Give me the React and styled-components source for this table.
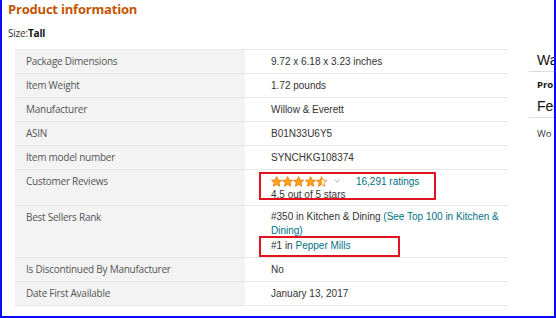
import React from "react";
import styled, { createGlobalStyle } from "styled-components";

const Global = createGlobalStyle`
  html, body { margin: 0; padding: 0; background: #fff; }
  body { font-family: "Liberation Sans", Arial, sans-serif; }
`;

const Page = styled.div`
  position: relative;
  width: 556px;
  height: 318px;
  box-sizing: border-box;
  border: 2px solid #0a0aff;
  border-top: none;
  overflow: hidden;
  display: flex;
  background: #fff;
`;

const Main = styled.div`
  flex: 0 0 auto;
  box-sizing: border-box;
  width: 506px;
  padding-left: 6px;
`;

const Title = styled.h2`
  margin: 0;
  padding-top: 1px;
  font-family: "Open Sans", sans-serif;
  font-weight: 700;
  font-size: 13px;
  line-height: 17px;
  color: #c45500;
  letter-spacing: -0.2px;
`;

const SizeLine = styled.div`
  margin-top: 8px;
  font-family: "Open Sans", sans-serif;
  font-size: 10px;
  line-height: 15px;
  color: #333;
  letter-spacing: -0.2px;

  b { font-weight: 700; color: #111; }
`;

const Table = styled.table`
  margin-top: 8px;
  margin-left: 7px;
  width: 493px;
  border-collapse: collapse;
  border-top: 1px solid #e7e7e7;
`;

const Row = styled.tr`
  border-bottom: 1px solid #e7e7e7;
`;

const Label = styled.th`
  width: 230px;
  box-sizing: border-box;
  background: #f3f3f3;
  padding: 4px 8px 4px 11px;
  text-align: left;
  vertical-align: top;
  font-family: "Open Sans", sans-serif;
  font-weight: 400;
  font-size: 10px;
  letter-spacing: -0.25px;
  line-height: 15px;
  height: ${(p) => p.$h || 23}px;
  color: #555;
`;

const Value = styled.td`
  box-sizing: border-box;
  padding: 4px 5px 4px 26px;
  vertical-align: top;
  font-size: 10px;
  line-height: ${(p) => p.$lh || 15}px;
  color: #333;
`;

const Link = styled.span`
  color: #007185;
`;

const RatingLine = styled.div`
  display: flex;
  align-items: center;
  height: 14px;
`;

const Stars = styled.div`
  display: flex;
`;

const Caret = styled.svg`
  margin-left: 7px;
  margin-right: 16px;
`;

const Sidebar = styled.div`
  flex: 0 0 200px;
  margin-left: 21px;
  padding-top: 49px;
`;

const SideHeading = styled.div`
  padding-left: 8px;
  margin-top: ${(p) => p.$gap || 0}px;
  font-family: "Liberation Sans", Arial, sans-serif;
  font-size: 14px;
  line-height: 22px;
  color: #111;
  border-bottom: 1px solid #ddd;
`;

const SideSmall = styled.div`
  padding-left: 8px;
  font-family: "Open Sans", sans-serif;
  font-size: 9.5px;
  font-weight: ${(p) => (p.$bold ? 700 : 400)};
  line-height: 14px;
  margin: ${(p) => (p.$bold ? "6px 0 3px" : "9px 0 3px")};
  color: ${(p) => (p.$bold ? "#111" : "#333")};
`;

const Mark = styled.div`
  position: absolute;
  border: 2px solid #e3121f;
  box-sizing: border-box;
`;

function Star({ fill }) {
  const id = `half-${fill}`;
  const pts = "5.5,0.6 7,4 10.6,4.3 7.9,6.7 8.7,10.3 5.5,8.4 2.3,10.3 3.1,6.7 0.4,4.3 4,4";
  return (
    <svg width="11.2" height="11" viewBox="0 0 11 11">
      <defs>
        <linearGradient id={id}>
          <stop offset={fill} stopColor="#ffa41c" />
          <stop offset={fill} stopColor="#fff" />
        </linearGradient>
      </defs>
      <polygon points={pts} fill={`url(#${id})`} stroke="#e47911" strokeWidth="0.8" strokeLinejoin="round" />
    </svg>
  );
}

const rows = [
  ["Package Dimensions", "9.72 x 6.18 x 3.23 inches"],
  ["Item Weight", "1.72 pounds"],
  ["Manufacturer", "Willow & Everett"],
  ["ASIN", "B01N33U6Y5"],
  ["Item model number", "SYNCHKG108374"],
];

export default function App() {
  return (
    <Page>
      <Global />
      <Main>
        <Title>Product information</Title>
        <SizeLine>
          Size:<b>Tall</b>
        </SizeLine>
        <Table>
          <tbody>
            {rows.map(([k, v]) => (
              <Row key={k}>
                <Label>{k}</Label>
                <Value>{v}</Value>
              </Row>
            ))}
            <Row>
              <Label $h={36}>Customer Reviews</Label>
              <Value $lh={13}>
                <RatingLine>
                  <Stars>
                    <Star fill="1" />
                    <Star fill="1" />
                    <Star fill="1" />
                    <Star fill="1" />
                    <Star fill="0.5" />
                  </Stars>
                  <Caret width="6" height="4" viewBox="0 0 6 4">
                    <path d="M0.5 0.5 L3 3 L5.5 0.5" fill="none" stroke="#aaa" strokeWidth="0.9" />
                  </Caret>
                  <Link>16,291 ratings</Link>
                </RatingLine>
                <div>4.5 out of 5 stars</div>
              </Value>
            </Row>
            <Row>
              <Label $h={51}>Best Sellers Rank</Label>
              <Value $lh={14.3}>
                #350 in Kitchen &amp; Dining <Link>(See Top 100 in Kitchen &amp; Dining)</Link>
                <br />
                #1 in <Link>Pepper Mills</Link>
              </Value>
            </Row>
            <Row>
              <Label>Is Discontinued By Manufacturer</Label>
              <Value>No</Value>
            </Row>
            <Row>
              <Label>Date First Available</Label>
              <Value>January 13, 2017</Value>
            </Row>
          </tbody>
        </Table>
      </Main>
      <Sidebar>
        <SideHeading>Wa</SideHeading>
        <SideSmall $bold>Pro</SideSmall>
        <SideHeading $gap={2}>Fee</SideHeading>
        <SideSmall>Wo</SideSmall>
      </Sidebar>
      <Mark style={{ left: 257, top: 172, width: 177, height: 28 }} />
      <Mark style={{ left: 257, top: 236, width: 141, height: 21 }} />
    </Page>
  );
}
